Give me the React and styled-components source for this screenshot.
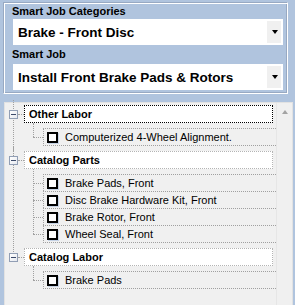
import React from "react";
import styled, { createGlobalStyle } from "styled-components";

const GlobalStyle = createGlobalStyle`
  html, body {
    margin: 0;
    padding: 0;
    background: #b0c4de;
  }
  body {
    font-family: "Liberation Sans", Arial, sans-serif;
    color: #000;
  }
  #root {
    width: 295px;
    height: 305px;
    overflow: hidden;
  }
`;

const groups = [
  {
    title: "Other Labor",
    focused: true,
    items: ["Computerized 4-Wheel Alignment."],
  },
  {
    title: "Catalog Parts",
    items: [
      "Brake Pads, Front",
      "Disc Brake Hardware Kit, Front",
      "Brake Rotor, Front",
      "Wheel Seal, Front",
    ],
  },
  {
    title: "Catalog Labor",
    items: ["Brake Pads"],
  },
];

const App = () => {
  return (
    <Page>
      <GlobalStyle />
      <Panel>
        <FieldLabel>Smart Job Categories</FieldLabel>
        <Combo>
          <ComboText>Brake - Front Disc</ComboText>
          <DropButton>
            <DownArrow />
          </DropButton>
        </Combo>
        <FieldLabel $gap>Smart Job</FieldLabel>
        <Combo $gap>
          <ComboText>Install Front Brake Pads &amp; Rotors</ComboText>
          <DropButton>
            <DownArrow />
          </DropButton>
        </Combo>
      </Panel>

      <Tree>
        <TreeContent>
          {groups.map((g, i) => (
            <Group key={g.title} $last={i === groups.length - 1}>
              <GroupRow>
                <Expander>
                  <Minus />
                </Expander>
                <Connector />
                <HeaderBox $focused={g.focused}>{g.title}</HeaderBox>
              </GroupRow>
              <Children>
                {g.items.map((item) => (
                  <ChildRow key={item}>
                    <CheckBox />
                    <ChildText>{item}</ChildText>
                  </ChildRow>
                ))}
              </Children>
            </Group>
          ))}
        </TreeContent>
        <ScrollBar>
          <ScrollButton>
            <UpArrow />
          </ScrollButton>
        </ScrollBar>
      </Tree>
    </Page>
  );
};

export default App;

const Page = styled.div`
  width: 295px;
  height: 305px;
  padding-top: 2px;
  box-sizing: border-box;
  display: flex;
  flex-direction: column;
`;

const Panel = styled.div`
  margin-left: 3px;
  width: 285px;
  box-sizing: border-box;
  border: 1px solid;
  border-color: #98a9c2 #fff #fff #98a9c2;
  box-shadow: inset 1px 1px 0 #fff, inset -1px -1px 0 #98a9c2;
  padding: 2px 4px 3px 9px;
  display: flex;
  flex-direction: column;
`;

const FieldLabel = styled.div`
  font-size: 11px;
  font-weight: bold;
  line-height: 13px;
  height: 13px;
  margin-left: -1px;
  margin-top: ${(p) => (p.$gap ? "3px" : "0")};
  white-space: nowrap;
`;

const Combo = styled.div`
  margin-top: ${(p) => (p.$gap ? "3px" : "1px")};
  height: 26px;
  background: #fff;
  display: flex;
  align-items: center;
  padding: 2px 2px 2px 5px;
  box-sizing: border-box;
`;

const ComboText = styled.div`
  flex: 1;
  font-size: 13.5px;
  font-weight: bold;
  white-space: nowrap;
  overflow: hidden;
`;

const DropButton = styled.div`
  width: 14px;
  align-self: stretch;
  background: #f0f0f0;
  display: flex;
  align-items: center;
  justify-content: center;
`;

const DownArrow = styled.div`
  width: 0;
  height: 0;
  border-left: 3.5px solid transparent;
  border-right: 3.5px solid transparent;
  border-top: 4px solid #000;
  margin-left: 1px;
`;

const Tree = styled.div`
  margin-top: 8px;
  margin-left: 4px;
  width: 289px;
  height: 210px;
  flex-shrink: 0;
  box-sizing: border-box;
  border: 1px solid #e2e2e2;
  background: #f0f0f0;
  display: flex;
`;

const TreeContent = styled.div`
  flex: 1;
  padding-top: 2px;
  min-width: 0;
`;

const line = "#a0a0a0";

const Group = styled.div`
  position: relative;
  margin-bottom: 5px;

  &::before {
    content: "";
    position: absolute;
    left: 8px;
    top: ${(p) => (p.$last ? "-5px" : "-5px")};
    height: ${(p) => (p.$last ? "9px" : "auto")};
    bottom: ${(p) => (p.$last ? "auto" : "-5px")};
    border-left: 1px dotted ${line};
  }
`;

const GroupRow = styled.div`
  display: flex;
  align-items: center;
  height: 18px;
  padding-left: 4px;
  padding-right: 3px;
`;

const Expander = styled.div`
  position: relative;
  z-index: 1;
  width: 9px;
  height: 9px;
  box-sizing: border-box;
  border: 1px solid #919eb4;
  background: linear-gradient(135deg, #ffffff 0%, #e6e9ef 100%);
  display: flex;
  align-items: center;
  justify-content: center;
`;

const Minus = styled.div`
  width: 5px;
  height: 1px;
  background: #3c4a6a;
`;

const Connector = styled.div`
  width: 6px;
  border-top: 1px dotted ${line};
`;

const HeaderBox = styled.div`
  flex: 1;
  height: 18px;
  box-sizing: border-box;
  border: 1px dotted ${(p) => (p.$focused ? "#000" : "#b4b4b4")};
  background: #fff;
  padding-left: 4px;
  font-size: 11px;
  font-weight: bold;
  line-height: 16px;
  white-space: nowrap;
`;

const Children = styled.div`
  position: relative;
  margin-top: 5px;
  margin-left: 38px;

  &::before {
    content: "";
    position: absolute;
    left: -10px;
    top: -5px;
    bottom: 9px;
    border-left: 1px dotted ${line};
  }
`;

const ChildRow = styled.div`
  position: relative;
  height: 17px;
  box-sizing: border-box;
  border-top: 1px dotted ${line};
  border-left: 1px dotted ${line};
  padding-left: 3px;
  display: flex;
  align-items: center;

  &:last-child {
    height: 18px;
    border-bottom: 1px dotted ${line};
  }

  &::before {
    content: "";
    position: absolute;
    left: -11px;
    width: 10px;
    top: 8px;
    border-top: 1px dotted ${line};
  }
`;

const CheckBox = styled.div`
  width: 11px;
  height: 11px;
  box-sizing: border-box;
  border: 2px solid #000;
  background: #fff;
  box-shadow: 1px 1px 0 #c6d3e6;
  flex-shrink: 0;
`;

const ChildText = styled.div`
  margin-left: 7px;
  font-size: 11px;
  white-space: nowrap;
`;

const ScrollBar = styled.div`
  width: 15px;
  flex-shrink: 0;
  border-left: 1px solid #e6e6e6;
  background: #f0f0f0;
`;

const ScrollButton = styled.div`
  height: 17px;
  display: flex;
  align-items: center;
  justify-content: center;
`;

const UpArrow = styled.div`
  width: 0;
  height: 0;
  border-left: 3.5px solid transparent;
  border-right: 3.5px solid transparent;
  border-bottom: 4px solid #a3a3a3;
`;
